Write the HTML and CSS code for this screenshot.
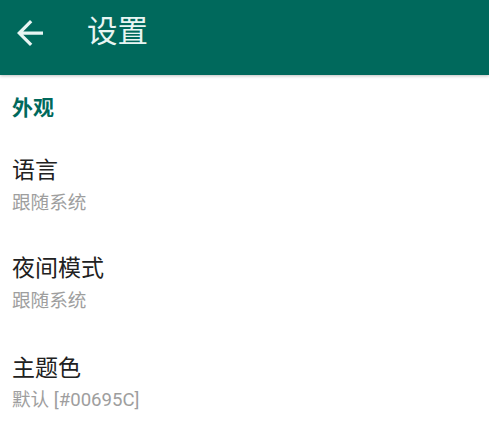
FILE: index.html
```html
<!DOCTYPE html>
<html lang="zh-CN">
<head>
<meta charset="utf-8">
<title>设置</title>
<link rel="stylesheet" href="styles.css">
</head>
<body>
<header class="appbar">
  <button class="back" aria-label="返回">
    <svg class="back-icon" viewBox="4 4 16 16" width="26" height="26"><path d="M20 11H7.83l5.59-5.59L12 4l-8 8 8 8 1.41-1.41L7.83 13H20v-2z" fill="currentColor"/></svg>
  </button>
  <h1 class="title">设置</h1>
</header>
<main class="prefs">
  <div class="category">外观</div>
  <div class="item">
    <div class="item-title">语言</div>
    <div class="item-summary">跟随系统</div>
  </div>
  <div class="item">
    <div class="item-title">夜间模式</div>
    <div class="item-summary">跟随系统</div>
  </div>
  <div class="item item-last">
    <div class="item-title">主题色</div>
    <div class="item-summary">默认 [#00695C]</div>
  </div>
</main>
</body>
</html>
```
FILE: styles.css
```css
html, body {
  margin: 0;
  padding: 0;
  background: #ffffff;
}
body {
  font-family: Roboto, "Noto Sans CJK SC", sans-serif;
  width: 489px;
  height: 427px;
  overflow: hidden;
}
.appbar {
  height: 75px;
  box-sizing: border-box;
  padding-top: 17px;
  background: #00695C;
  display: flex;
  align-items: flex-start;
  box-shadow: 0 1px 3px rgba(0, 0, 0, 0.25);
  position: relative;
  z-index: 1;
}
.back {
  border: 0;
  background: none;
  padding: 0;
  margin: 3px 0 0 17px;
  width: 26px;
  height: 26px;
  color: #e8f5f3;
  display: flex;
}
.title {
  margin: 0 0 0 44px;
  font-weight: 400;
  font-size: 30.5px;
  line-height: 30px;
  color: #e8f5f3;
}
.prefs {
  display: flex;
  flex-direction: column;
}
.category {
  padding: 23px 12px 0;
  font-size: 21px;
  line-height: 21px;
  font-weight: 700;
  color: #00695C;
}
.item {
  padding: 40px 12px 0;
  display: flex;
  flex-direction: column;
  gap: 12px;
}
.item + .item {
  padding-top: 45px;
}
.item-last {
  gap: 11px;
}
.item + .item-last {
  padding-top: 47px;
}
.item-title {
  font-size: 23px;
  line-height: 23px;
  color: #212121;
}
.item-summary {
  font-size: 18.6px;
  line-height: 18px;
  color: #9e9e9e;
}
```
